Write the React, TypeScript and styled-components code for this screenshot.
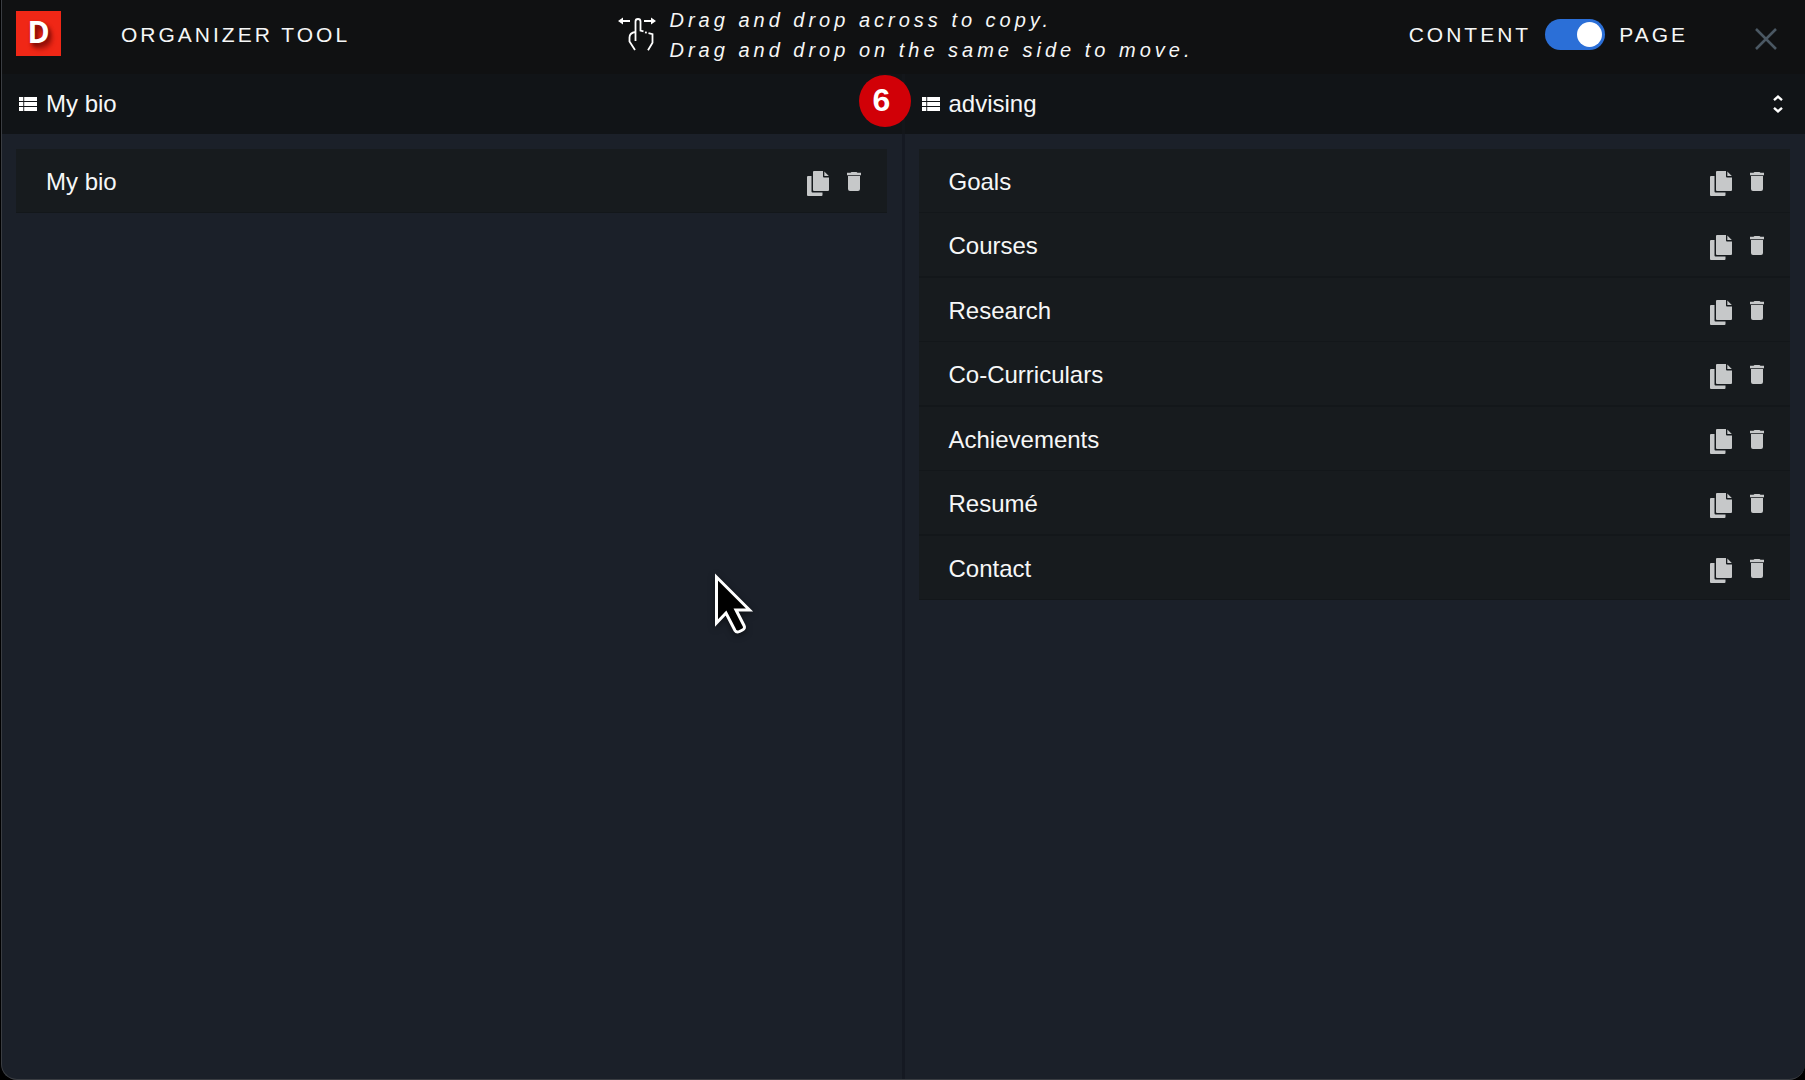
import React, { useState } from 'react';
import styled, { createGlobalStyle } from 'styled-components';

const GlobalStyle = createGlobalStyle`
  *, *::before, *::after { box-sizing: border-box; }
  body {
    margin: 0;
    background: #000;
    color: #f6f7f7;
    font-family: "Liberation Sans", Arial, Helvetica, sans-serif;
  }
`;

const Window = styled.div`
  min-height: 100vh;
  margin-left: 1px;
  display: flex;
  flex-direction: column;
  overflow: hidden;
  background: #1b2029;
  border: solid #3a3d42;
  border-width: 0 0 1px 1px;
  border-radius: 0 0 16px 16px;
`;

const Header = styled.header`
  display: grid;
  grid-template-columns: 1fr auto 1fr;
  height: 74px;
  padding: 0 26px 0 14px;
  background: #101112;
`;

const Brand = styled.div`
  display: flex;
  align-items: flex-start;
  gap: 60px;
`;

const Logo = styled.span`
  display: flex;
  align-items: center;
  justify-content: center;
  width: 45px;
  height: 45px;
  margin-top: 11px;
  background: #f02716;
  color: #fff;
  font: 700 30px/42px "Open Sans", "Liberation Sans", sans-serif;
  padding-bottom: 3px;
  text-shadow: 2px 3px 4px rgba(90, 0, 0, 0.75), 4px 6px 5px rgba(90, 0, 0, 0.4);
`;

const Caps = styled.span`
  font-size: 21px;
  line-height: 24px;
  font-weight: 400;
  letter-spacing: 3px;
  text-transform: uppercase;
  white-space: nowrap;
`;

const Title = styled(Caps).attrs({ as: 'h1' })`
  margin: 23px 0 0;
`;

const Hint = styled.div`
  display: flex;
  gap: 14px;
  padding: 5px 0 0 16px;
  svg { margin-top: 12px; }
`;

const HintText = styled.p`
  margin: 0;
  font-size: 20px;
  line-height: 30px;
  font-style: italic;
  letter-spacing: 4px;
  white-space: nowrap;
`;

const Actions = styled.div`
  display: flex;
  justify-content: flex-end;
  align-items: flex-start;
`;

const SwitchLabel = styled.label`
  display: flex;
  align-items: center;
  gap: 14px;
  margin-top: 19px;
  cursor: pointer;
`;

const Switch = styled.input.attrs({ type: 'checkbox', role: 'switch' })`
  appearance: none;
  display: flex;
  align-items: center;
  width: 60px;
  height: 31px;
  margin: 0;
  padding: 3px;
  border-radius: 16px;
  background: #4a525c;
  cursor: pointer;

  &::before {
    content: "";
    width: 25px;
    height: 25px;
    border-radius: 50%;
    background: #fff;
  }
  &:checked { background: #2b6fd7; justify-content: flex-end; }
`;

const IconButton = styled.button`
  display: flex;
  padding: 0;
  border: 0;
  background: none;
  color: #c6c8c9;
  cursor: pointer;
`;

const CloseButton = styled(IconButton)`
  margin: 26px 0 0 65px;
  color: #4b5863;
`;

const Panels = styled.main`
  flex: 1;
  display: grid;
  grid-template-columns: calc(50% - 2px) 1fr;
`;

const Panel = styled.section`
  display: flex;
  flex-direction: column;
  & + & > div { border-left: 3px solid #151922; }
  & + & > header { border-left: 3px solid #13161a; }
`;

const PanelHeader = styled.header`
  position: relative;
  display: flex;
  align-items: center;
  gap: 9px;
  height: 60px;
  padding: 0 17px;
  background: #111417;
`;

const PanelTitle = styled.h2`
  flex: 1;
  margin: 0;
  font-size: 24px;
  line-height: 28px;
  font-weight: 400;
`;

const Badge = styled.span`
  position: absolute;
  top: 1px;
  right: -9px;
  z-index: 1;
  width: 52px;
  height: 52px;
  padding-right: 6px;
  border-radius: 50%;
  background: #d10007;
  color: #fff;
  font-size: 32px;
  line-height: 50px;
  font-weight: 700;
  text-align: center;
`;

const PanelBody = styled.div`
  flex: 1;
  padding: 15px 15px 15px 14px;
`;

const List = styled.ul`
  margin: 0;
  padding: 0;
  list-style: none;
`;

const Row = styled.li`
  display: flex;
  align-items: center;
  gap: 18px;
  padding: 0 26px 0 30px;
  background: #171b1e;
  border-bottom: 1px solid #13171a;
  cursor: grab;
  &:nth-child(even) { border-bottom-width: 2px; }
`;

const RowName = styled.span`
  flex: 1;
  padding: 19px 0 16px;
  font-size: 24px;
  line-height: 28px;
`;

const CopyButton = styled(IconButton)`
  padding-top: 5px;
`;

const DeleteButton = styled(IconButton)`
  padding-top: 2px;
`;

const Pointer = styled.svg`
  position: absolute;
  left: 712px;
  top: 571px;
  filter: drop-shadow(0 2px 3px rgba(0, 0, 0, 0.5));
  pointer-events: none;
`;

const ListIcon = () => (
  <svg width="18" height="14" viewBox="0 0 18 14" fill="#fff" aria-hidden="true">
    <path d="M0 0h4.300v4H0zM5.200 0H18v4H5.200zM0 5h4.300v4H0zM5.200 5H18v4H5.200zM0 10h4.300v4H0zM5.200 10H18v4H5.200z" />
  </svg>
);

const HandIcon = () => (
  <svg width="38" height="38" viewBox="0 0 38 38" fill="none" stroke="#fff" strokeWidth="1.800" aria-hidden="true">
    <path d="M3 4h9M26 4h9" strokeWidth="2" />
    <path d="M0 4l5-3.500v7zM38 4l-5-3.500v7z" fill="#fff" stroke="none" />
    <path d="M17.500 24V4.500a2.500 2.500 0 0 1 5 0v9l3 .8M17.500 15c-4 .5-6 2-6 5.500v4l5.500 8.500M27 15.300l1.800.4M30.500 16.200l4 1v8.500l-4.500 7.500" />
  </svg>
);

const CopyIcon = () => (
  <svg width="22" height="25" viewBox="0 0 22 25" fill="currentColor" aria-hidden="true">
    <path d="M1 5h3.500v15.500a1 1 0 0 0 1 1H15.500V24a1 1 0 0 1-1 1H1a1 1 0 0 1-1-1V6a1 1 0 0 1 1-1z" />
    <path d="M7 0h9v5.500a1 1 0 0 0 1 1h5V19a1 1 0 0 1-1 1H7a1 1 0 0 1-1-1V1a1 1 0 0 1 1-1z" />
    <path d="M17.300.5L21.800 5h-4.500z" />
  </svg>
);

const TrashIcon = () => (
  <svg width="14" height="19" viewBox="0 0 14 19" fill="currentColor" aria-hidden="true">
    <path d="M4.500 0h5l1 .8H14v2.400H0V.8h3.500zM1 3.900h12V17a2 2 0 0 1-2 2H3a2 2 0 0 1-2-2z" />
  </svg>
);

const SortIcon = () => (
  <svg width="10" height="18" viewBox="0 0 10 18" fill="none" stroke="#fff" strokeWidth="2.400" aria-hidden="true">
    <path d="M1 5.200l4-3.500 4 3.500M1 12.800l4 3.500 4-3.500" />
  </svg>
);

const SortButton = styled(IconButton)`
  margin-right: 5px;
`;

function Items({ names }: { names: string[] }) {
  return (
    <PanelBody>
      <List>
        {names.map((name) => (
          <Row key={name} draggable>
            <RowName>{name}</RowName>
            <CopyButton type="button" aria-label={`Copy ${name}`}><CopyIcon /></CopyButton>
            <DeleteButton type="button" aria-label={`Delete ${name}`}><TrashIcon /></DeleteButton>
          </Row>
        ))}
      </List>
    </PanelBody>
  );
}

const pages = ['Goals', 'Courses', 'Research', 'Co-Curriculars', 'Achievements', 'Resumé', 'Contact'];

export default function App() {
  const [pageMode, setPageMode] = useState(true);
  return (
    <>
      <GlobalStyle />
      <Window>
        <Header>
          <Brand>
            <Logo>D</Logo>
            <Title>Organizer tool</Title>
          </Brand>
          <Hint>
            <HandIcon />
            <HintText>
              Drag and drop across to copy.<br />
              Drag and drop on the same side to move.
            </HintText>
          </Hint>
          <Actions>
            <SwitchLabel>
              <Caps>Content</Caps>
              <Switch checked={pageMode} onChange={(e) => setPageMode(e.target.checked)} />
              <Caps>Page</Caps>
            </SwitchLabel>
            <CloseButton type="button" aria-label="Close">
              <svg width="26" height="26" viewBox="0 0 26 26" stroke="currentColor" strokeWidth="2.500" aria-hidden="true">
                <path d="M3 3l20 20M23 3L3 23" />
              </svg>
            </CloseButton>
          </Actions>
        </Header>
        <Panels>
          <Panel>
            <PanelHeader>
              <ListIcon />
              <PanelTitle>My bio</PanelTitle>
              <Badge>6</Badge>
            </PanelHeader>
            <Items names={['My bio']} />
          </Panel>
          <Panel>
            <PanelHeader>
              <ListIcon />
              <PanelTitle>advising</PanelTitle>
              <SortButton type="button" aria-label="Choose page"><SortIcon /></SortButton>
            </PanelHeader>
            <Items names={pages} />
          </Panel>
        </Panels>
      </Window>
      <Pointer width="46" height="68" viewBox="0 0 46 68" aria-hidden="true">
        <path
          d="M4.500 6v46l9.500-10 9 17.500q1.500 2.500 4.500 1l3-1.500q3-1.500 1.500-4.500L24 39H37.500z"
          fill="#000" stroke="#fff" strokeWidth="3"
        />
      </Pointer>
    </>
  );
}
